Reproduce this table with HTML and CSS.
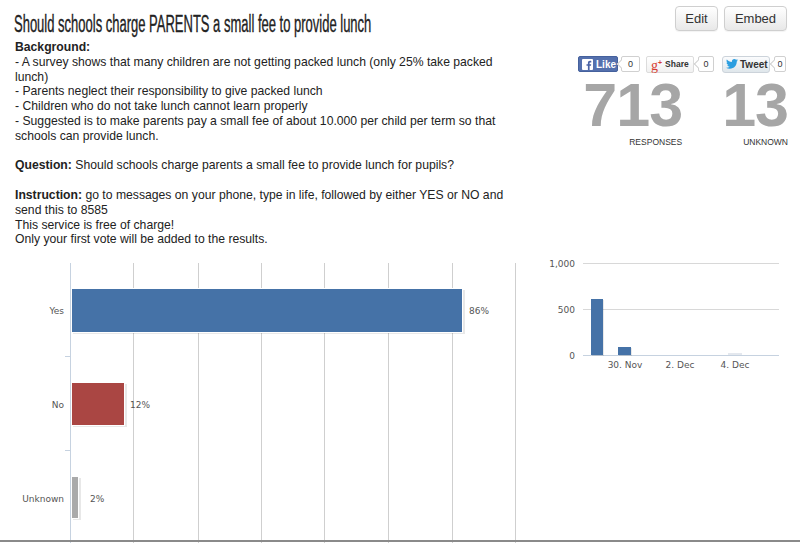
FILE: index.html
```html
<!DOCTYPE html>
<html>
<head>
<meta charset="utf-8">
<link rel="stylesheet" href="styles.css">
</head>
<body>
<div class="top">
  <div class="info">
    <h1 class="title">Should schools charge PARENTS a small fee to provide lunch</h1>
    <div class="desc">
      <b>Background:</b><br>
      - A survey shows that many children are not getting packed lunch (only 25% take packed lunch)<br>
      - Parents neglect their responsibility to give packed lunch<br>
      - Children who do not take lunch cannot learn properly<br>
      - Suggested is to make parents pay a small fee of about 10.000 per child per term so that schools can provide lunch.<br>
      <br>
      <b>Question:</b> Should schools charge parents a small fee to provide lunch for pupils?<br>
      <br>
      <b>Instruction:</b> go to messages on your phone, type in life, followed by either YES or NO and send this to 8585<br>
      This service is free of charge!<br>
      Only your first vote will be added to the results.
    </div>
  </div>
  <div class="side">
    <div class="actions">
      <button class="btn btn-edit">Edit</button>
      <button class="btn btn-embed">Embed</button>
    </div>
    <div class="social">
      <span class="fb"><svg class="fb-logo" width="11" height="11" viewBox="0 0 11 11"><rect width="11" height="11" rx="1" fill="#fff"/><path d="M7.6 11V6.8H9l.2-1.6H7.6v-1c0-.5.1-.8.8-.8h.9V1.9c-.2 0-.7-.1-1.3-.1-1.3 0-2.1.8-2.1 2.2v1.2H4.5v1.6h1.4V11z" fill="#4a63a5"/></svg>Like</span>
      <span class="count c1">0</span>
      <span class="gp"><span class="gp-logo">g<sup>+</sup></span>Share</span>
      <span class="count c2">0</span>
      <span class="tw"><svg width="12" height="10" viewBox="0 0 24 20"><path d="M24 2.4c-.9.4-1.8.7-2.8.8 1-.6 1.8-1.6 2.2-2.7-1 .6-2 1-3.1 1.2C19.3.7 18 0 16.6 0c-2.7 0-4.9 2.2-4.9 4.9 0 .4 0 .8.1 1.1C7.7 5.8 4.1 3.9 1.7.9c-.4.7-.7 1.6-.7 2.5 0 1.7.9 3.2 2.2 4.1-.8 0-1.6-.2-2.2-.6v.1c0 2.4 1.7 4.4 3.9 4.8-.4.1-.8.2-1.3.2-.3 0-.6 0-.9-.1.6 2 2.4 3.4 4.6 3.4-1.7 1.3-3.8 2.1-6.1 2.1-.4 0-.8 0-1.2-.1 2.2 1.4 4.8 2.2 7.5 2.2 9.1 0 14-7.5 14-14v-.6c1-.7 1.8-1.6 2.5-2.5z" fill="#2b9ee0"/></svg>Tweet</span>
      <span class="count c3">0</span>
    </div>
    <div class="stats">
      <div class="stat">
        <div class="num">713</div>
        <div class="lbl">RESPONSES</div>
      </div>
      <div class="stat">
        <div class="num">13</div>
        <div class="lbl">UNKNOWN</div>
      </div>
    </div>
  </div>
</div>
<div class="charts">
  <svg class="bar-chart" width="520" height="288" viewBox="0 0 520 288">
    <g stroke="#cfcfcf" stroke-width="1">
      <line x1="133.5" y1="8" x2="133.5" y2="288"/>
      <line x1="198.5" y1="8" x2="198.5" y2="288"/>
      <line x1="261.5" y1="8" x2="261.5" y2="288"/>
      <line x1="324.5" y1="8" x2="324.5" y2="288"/>
      <line x1="388.5" y1="8" x2="388.5" y2="288"/>
      <line x1="452.5" y1="8" x2="452.5" y2="288"/>
      <line x1="515.5" y1="8" x2="515.5" y2="288"/>
    </g>
    <line x1="70.5" y1="8" x2="70.5" y2="288" stroke="#c6d2e0"/>
    <g stroke="#c6d2e0">
      <line x1="65" y1="101.5" x2="70" y2="101.5"/>
      <line x1="65" y1="195.5" x2="70" y2="195.5"/>
    </g>
    <rect x="73" y="35" width="392" height="44" fill="#000" opacity="0.09"/>
    <rect x="71.5" y="33.5" width="391" height="44" fill="#4572a7" stroke="#fff"/>
    <rect x="73" y="129" width="54" height="43" fill="#000" opacity="0.09"/>
    <rect x="71.5" y="127.5" width="53" height="43" fill="#aa4643" stroke="#fff"/>
    <rect x="73" y="223" width="8" height="42" fill="#000" opacity="0.09"/>
    <rect x="71.5" y="221.5" width="7" height="42" fill="#aaaaaa" stroke="#fff"/>
    <g class="axis-lbl" text-anchor="end">
      <text x="64" y="59">Yes</text>
      <text x="64" y="153">No</text>
      <text x="64" y="247">Unknown</text>
    </g>
    <g class="axis-lbl">
      <text x="469" y="59">86%</text>
      <text x="130" y="153">12%</text>
      <text x="90" y="247">2%</text>
    </g>
  </svg>
  <svg class="time-chart" width="270" height="130" viewBox="0 0 270 130">
    <g stroke="#d8d8d8">
      <line x1="53" y1="8.5" x2="249" y2="8.5"/>
      <line x1="53" y1="54.5" x2="249" y2="54.5"/>
    </g>
    <line x1="53" y1="100.5" x2="249" y2="100.5" stroke="#c6d2e0"/>
    <rect x="62" y="45" width="12" height="56" fill="#000" opacity="0.09"/>
    <rect x="61" y="44" width="12" height="56" fill="#4572a7"/>
    <rect x="89" y="93" width="13" height="8" fill="#000" opacity="0.09"/>
    <rect x="88" y="92" width="13" height="8" fill="#4572a7"/>
    <rect x="198" y="98" width="14" height="2" fill="#e4e8ee"/>
    <g class="axis-lbl" text-anchor="end">
      <text x="45" y="12">1,000</text>
      <text x="45" y="58">500</text>
      <text x="45" y="104">0</text>
    </g>
    <g class="axis-lbl" text-anchor="middle">
      <text x="95" y="113">30. Nov</text>
      <text x="150" y="113">2. Dec</text>
      <text x="205" y="113">4. Dec</text>
    </g>
  </svg>
</div>
<div class="baseline"></div>
</body>
</html>
```

FILE: styles.css
```css
html, body {
  margin: 0;
  padding: 0;
  background: #fff;
  overflow: hidden;
}
body {
  width: 800px;
  height: 543px;
  font-family: "Liberation Sans", Arial, sans-serif;
  color: #222;
  position: relative;
}
.top {
  display: flex;
  justify-content: space-between;
  padding: 0 13px 0 15px;
  height: 255px;
}
.info {
  width: 500px;
}
.title {
  font-family: "Liberation Sans", Arial, sans-serif;
  font-weight: normal;
  font-size: 23px;
  color: #222;
  margin: 11px 0 0 -1px;
  line-height: 26px;
  white-space: nowrap;
  transform: scaleX(0.565);
  transform-origin: left center;
  -webkit-text-stroke: 0.35px #222;
}
.desc {
  font-size: 12.2px;
  line-height: 14.8px;
  margin-top: 3px;
}
.side {
  display: flex;
  flex-direction: column;
  align-items: flex-end;
  width: 212px;
}
.actions {
  display: flex;
  gap: 6px;
  margin-top: 6px;
}
.btn {
  font-family: "Liberation Sans", Arial, sans-serif;
  font-size: 13px;
  color: #333;
  height: 25px;
  padding: 0;
  border: 1px solid #cfcfcf;
  border-radius: 4px;
  background: linear-gradient(#fff, #e8e8e8);
  box-shadow: 0 1px 1px rgba(0,0,0,0.05);
}
.btn-edit { width: 43px; }
.btn-embed { width: 63px; }
.social {
  display: flex;
  align-items: center;
  align-self: flex-start;
  margin-top: 25px;
  margin-left: 3px;
  height: 16px;
  font-weight: bold;
}
.fb {
  display: flex;
  align-items: center;
  gap: 3px;
  height: 16px;
  width: 40px;
  box-sizing: border-box;
  padding-left: 3px;
  background: #5470ad;
  border: 1px solid #45619d;
  color: #fff;
  font-size: 10px;
  border-radius: 2px;
}
.count {
  position: relative;
  height: 16px;
  box-sizing: border-box;
  border: 1px solid #d0d0d0;
  border-radius: 2px;
  font-weight: normal;
  color: #333;
  line-height: 14px;
  font-size: 9px;
  text-align: center;
  background: #fff;
  margin-left: 4px;
}
.count::before {
  content: "";
  position: absolute;
  left: -4px;
  top: 4px;
  width: 5px;
  height: 5px;
  border-left: 1px solid #d0d0d0;
  border-bottom: 1px solid #d0d0d0;
  background: #fff;
  transform: rotate(45deg);
}
.c1 { width: 19px; margin-left: 3px; }
.c2 { width: 16px; }
.c3 { width: 12px; }
.gp {
  display: flex;
  align-items: center;
  gap: 3px;
  width: 48px;
  height: 17px;
  box-sizing: border-box;
  margin-left: 6px;
  padding: 0 0 0 4px;
  border: 1px solid #dcdcdc;
  border-radius: 2px;
  background: linear-gradient(#fff, #f1f1f1);
  color: #333;
  font-size: 8.5px;
}
.gp-logo {
  font-family: "Liberation Serif", serif;
  font-weight: normal;
  color: #d73d32;
  font-size: 14px;
  line-height: 12px;
}
.gp-logo sup {
  font-family: "Liberation Sans", sans-serif;
  font-size: 7px;
  font-weight: bold;
  vertical-align: 5px;
}
.tw {
  display: flex;
  align-items: center;
  gap: 2px;
  width: 48px;
  height: 17px;
  box-sizing: border-box;
  margin-left: 8px;
  padding: 0 0 0 3px;
  border: 1px solid #ccd3da;
  border-radius: 3px;
  background: linear-gradient(#fbfcfd, #dfe6eb);
  color: #333;
  font-size: 10px;
}
.stats {
  display: flex;
  gap: 40px;
  margin-top: 4px;
  margin-right: -1px;
}
.stat {
  text-align: right;
}
.num {
  font-size: 61px;
  font-weight: bold;
  color: #a6a6a6;
  line-height: 58px;
  letter-spacing: -1px;
}
.lbl {
  font-size: 8.5px;
  line-height: 10px;
  color: #333;
  margin-top: 3px;
}
.charts {
  display: flex;
  gap: 10px;
  align-items: flex-start;
}
.bar-chart, .time-chart { display: block; }
.axis-lbl {
  font-family: "DejaVu Sans", sans-serif;
  font-size: 9px;
  fill: #555;
}
.baseline {
  position: absolute;
  left: 0;
  right: 0;
  top: 540px;
  height: 2px;
  background: #8a8a8a;
}
```
